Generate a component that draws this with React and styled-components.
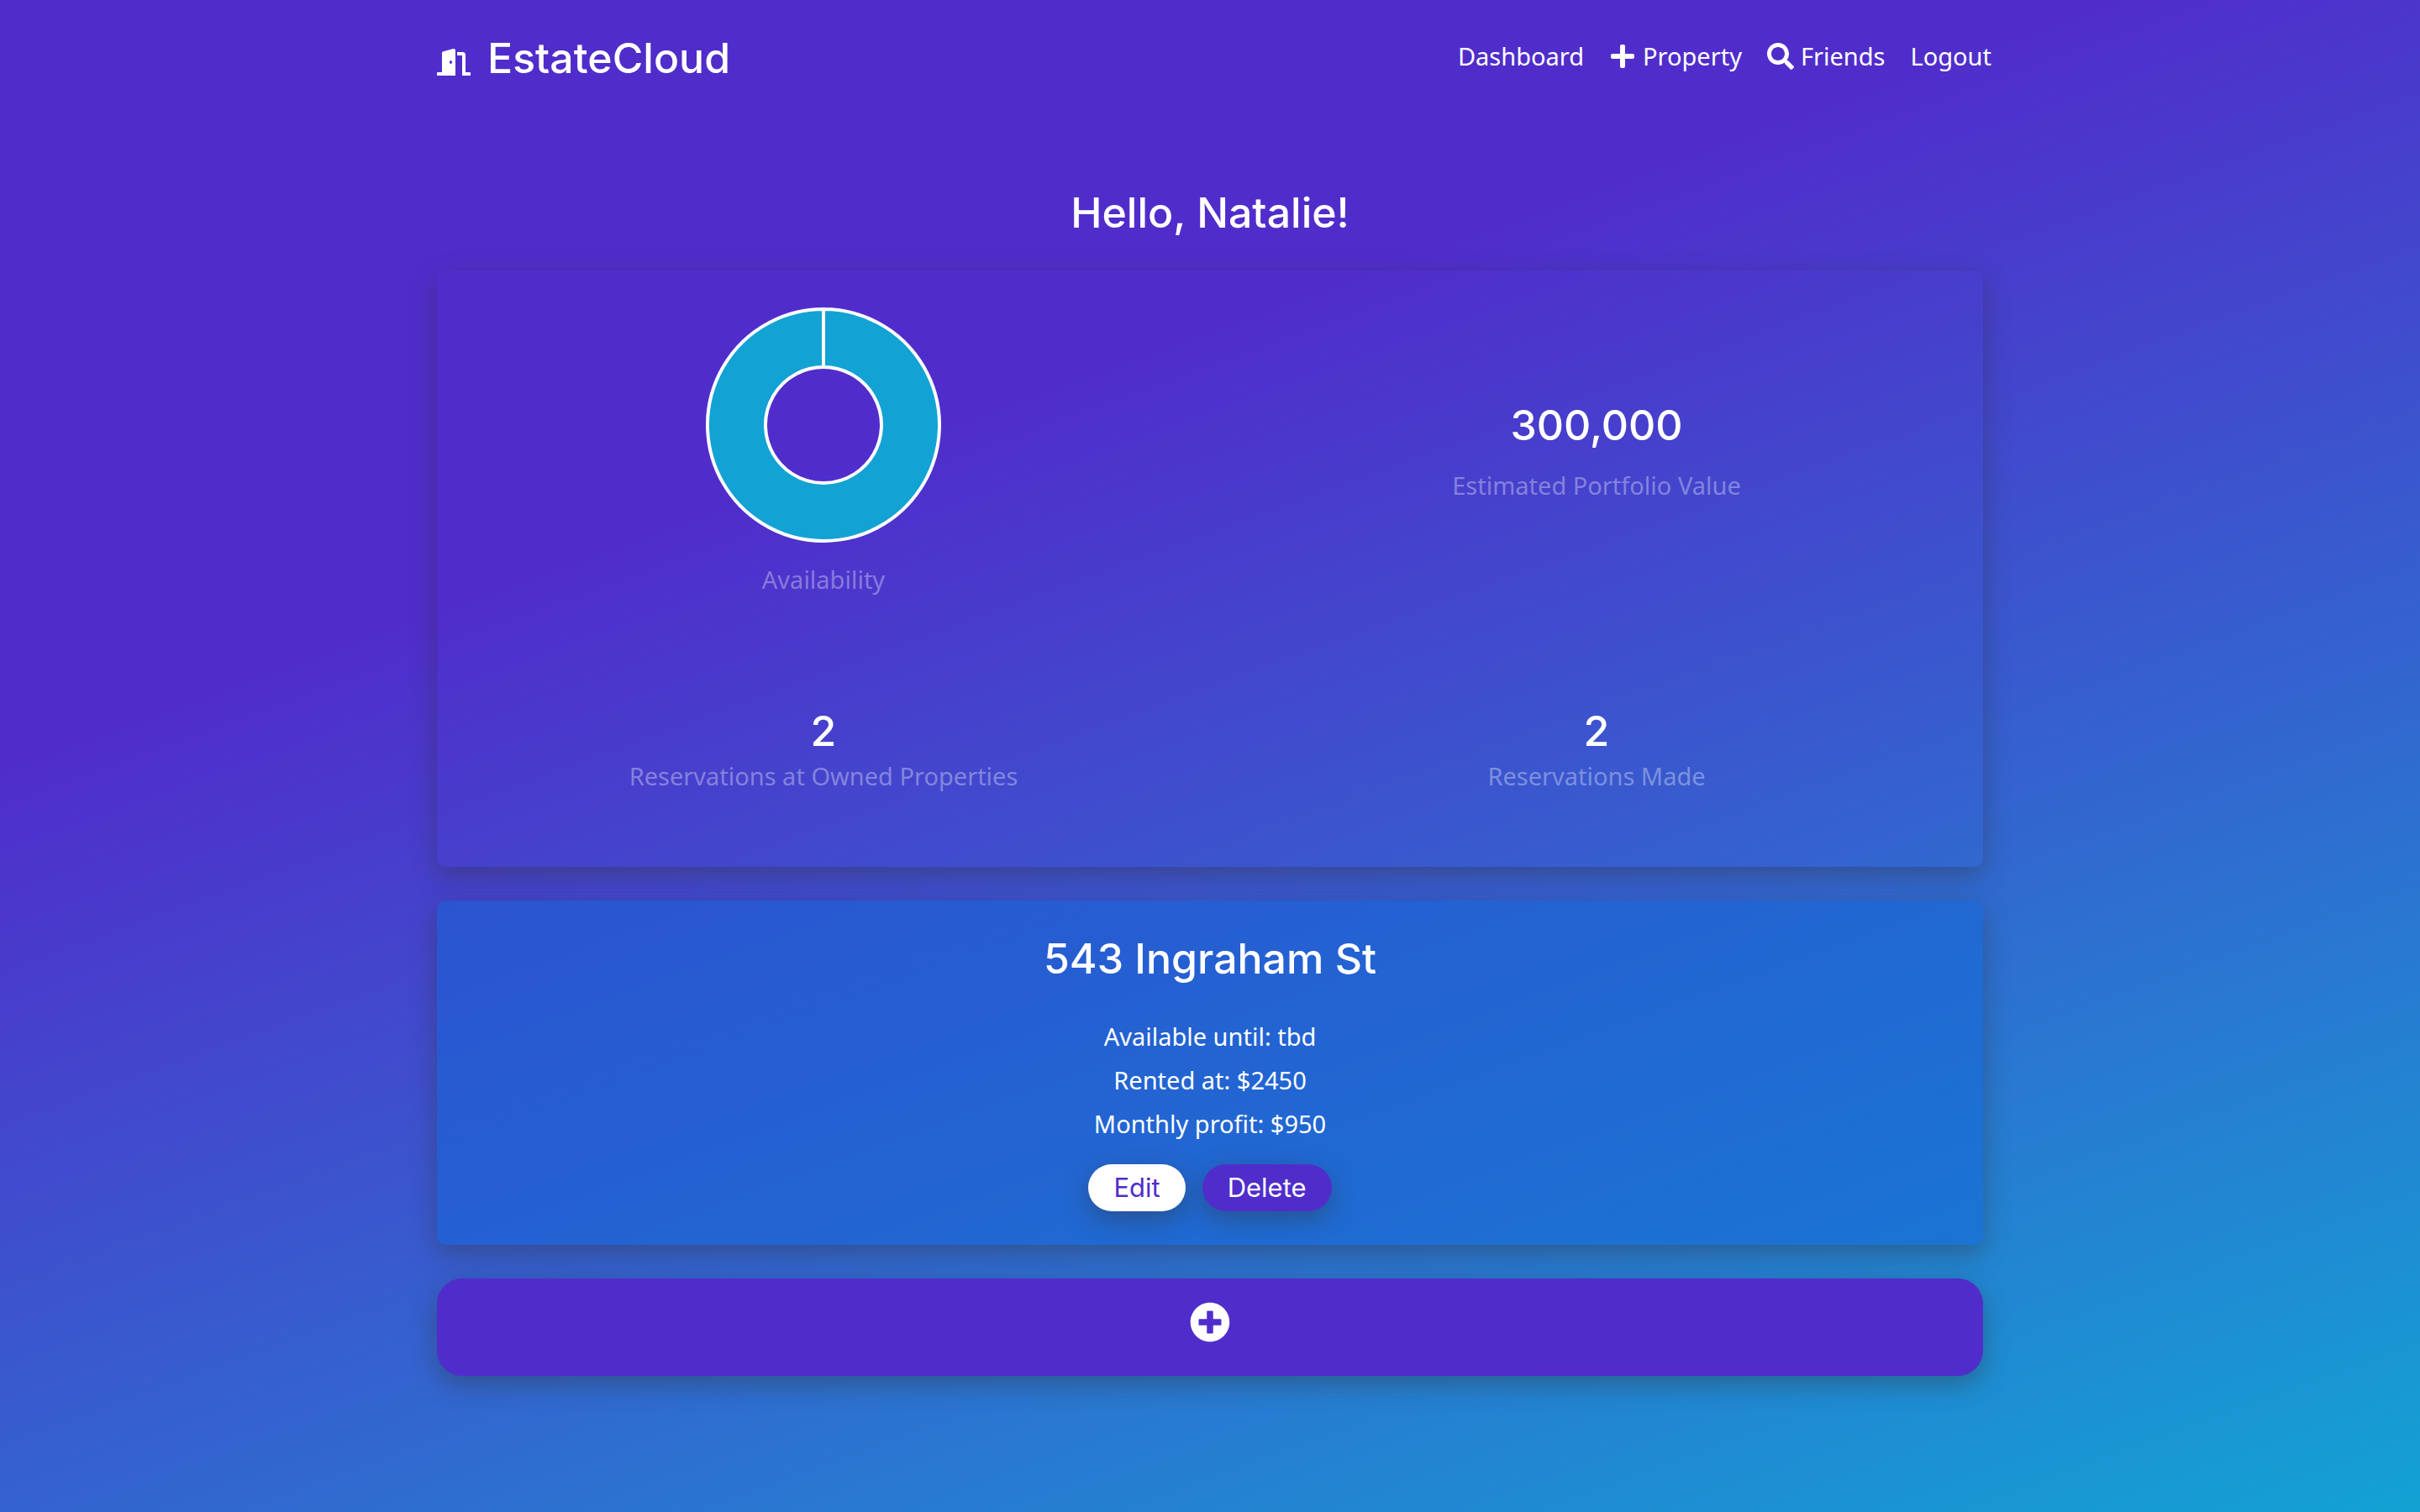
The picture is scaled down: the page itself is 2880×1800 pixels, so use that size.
import React from "react";
import styled, { createGlobalStyle } from "styled-components";
import { FaDoorOpen, FaPlus, FaPlusCircle, FaSearch } from "react-icons/fa";

const violet = "#502dcb";
const cyan = "#13a2d4";
const shadow = "0 10px 30px rgba(51, 51, 51, 0.4)";
const headingFont = '"Inter", "Liberation Sans", sans-serif';
const bodyFont = '"Noto Sans", "Open Sans", sans-serif';

const GlobalStyle = createGlobalStyle`
  *, *::before, *::after { box-sizing: border-box; }
  body {
    margin: 0;
    color: #fff;
    font-family: ${bodyFont};
    font-size: 29px;
    line-height: 52px;
  }
`;

const Page = styled.div`
  min-height: 100vh;
  background: linear-gradient(160deg, ${violet} 32%, ${cyan} 100%);
`;

const Header = styled.header`
  display: flex;
  align-items: center;
  justify-content: space-between;
  max-width: 1920px;
  margin: 0 auto;
  padding: 36px 30px 36px 40px;
`;

const Brand = styled.a`
  display: flex;
  align-items: center;
  gap: 20px;
  color: inherit;
  text-decoration: none;
  font-family: ${headingFont};
  font-size: 50px;
  font-weight: 500;
  line-height: 66px;

  svg {
    width: 40px;
    height: 32px;
    margin-top: 10px;
  }
`;

const Nav = styled.nav`
  display: flex;
  gap: 30px;
  padding-bottom: 4px;
`;

const NavLink = styled.a`
  display: flex;
  align-items: center;
  gap: 8px;
  color: inherit;
  text-decoration: none;

  svg {
    height: 32px;
    width: auto;
  }
`;

const Main = styled.main`
  display: flex;
  flex-direction: column;
  gap: 40px;
  max-width: 1920px;
  margin: 0 auto;
  padding: 82px 40px 160px;
`;

const Title = styled.h1`
  margin: 0;
  font-family: ${headingFont};
  font-size: 50px;
  font-weight: 500;
  line-height: 66px;
  text-align: center;
`;

const Greeting = styled(Title)`
  margin-bottom: -4px;
`;

const Card = styled.section`
  border-radius: 10px;
  background: ${(p) => (p.$tinted ? "rgba(18, 101, 214, 0.5)" : "transparent")};
  box-shadow: ${shadow};
  text-align: center;
`;

const Stats = styled(Card)`
  display: grid;
  grid-template-columns: 1fr 1fr;
  grid-template-rows: auto auto;
  row-gap: 126px;
  padding: 44px 0 82px;
`;

const Stat = styled.div`
  display: flex;
  flex-direction: column;
  align-items: center;
  justify-content: center;
  gap: ${(p) => p.$gap || 0}px;
`;

const StatValue = styled.div`
  font-family: ${headingFont};
  font-size: 50px;
  font-weight: 500;
  line-height: 56px;
`;

const StatLabel = styled.div`
  color: rgba(255, 255, 255, 0.35);
`;

const Chart = styled.svg`
  display: block;
  width: 280px;
  height: 280px;
`;

const Property = styled(Card)`
  display: flex;
  flex-direction: column;
  align-items: center;
  padding: 36px 40px 40px;
`;

const Details = styled.div`
  margin: 34px 0 22px;

  p { margin: 0; }
`;

const Actions = styled.div`
  display: flex;
  gap: 20px;
`;

const PillButton = styled.button`
  height: 56px;
  padding: 0 30px;
  border: 0;
  border-radius: 28px;
  background: ${(p) => (p.$primary ? violet : "#fff")};
  color: ${(p) => (p.$primary ? "#fff" : violet)};
  box-shadow: ${shadow};
  font-family: ${headingFont};
  font-size: 31px;
  line-height: 56px;
  cursor: pointer;
`;

const AddButton = styled.button`
  display: flex;
  justify-content: center;
  width: 100%;
  padding: 28px 0 40px;
  border: 0;
  border-radius: 30px;
  background: ${violet};
  color: #fff;
  box-shadow: ${shadow};
  cursor: pointer;

  svg {
    width: 48px;
    height: 48px;
  }
`;

function AvailabilityChart() {
  return (
    <Chart viewBox="0 0 280 280" role="img" aria-label="Availability">
      <path
        d="M140 2A138 138 0 1 1 139.99 2L139.99 71A69 69 0 1 0 140 71Z"
        fill={cyan}
        stroke="#fff"
        strokeWidth="4"
      />
    </Chart>
  );
}

export default function App() {
  return (
    <Page>
      <GlobalStyle />
      <Header>
        <Brand href="#">
          <FaDoorOpen />
          EstateCloud
        </Brand>
        <Nav>
          <NavLink href="#dashboard">Dashboard</NavLink>
          <NavLink href="#property"><FaPlus />Property</NavLink>
          <NavLink href="#friends"><FaSearch />Friends</NavLink>
          <NavLink href="#logout">Logout</NavLink>
        </Nav>
      </Header>
      <Main>
        <Greeting>Hello, Natalie!</Greeting>
        <Stats>
          <Stat $gap={18}>
            <AvailabilityChart />
            <StatLabel>Availability</StatLabel>
          </Stat>
          <Stat $gap={18}>
            <StatValue>300,000</StatValue>
            <StatLabel>Estimated Portfolio Value</StatLabel>
          </Stat>
          <Stat>
            <StatValue>2</StatValue>
            <StatLabel>Reservations at Owned Properties</StatLabel>
          </Stat>
          <Stat>
            <StatValue>2</StatValue>
            <StatLabel>Reservations Made</StatLabel>
          </Stat>
        </Stats>
        <Property $tinted>
          <Title as="h2">543 Ingraham St</Title>
          <Details>
            <p>Available until: tbd</p>
            <p>Rented at: $2450</p>
            <p>Monthly profit: $950</p>
          </Details>
          <Actions>
            <PillButton type="button">Edit</PillButton>
            <PillButton type="button" $primary>Delete</PillButton>
          </Actions>
        </Property>
        <AddButton type="button" aria-label="Add property">
          <FaPlusCircle />
        </AddButton>
      </Main>
    </Page>
  );
}
